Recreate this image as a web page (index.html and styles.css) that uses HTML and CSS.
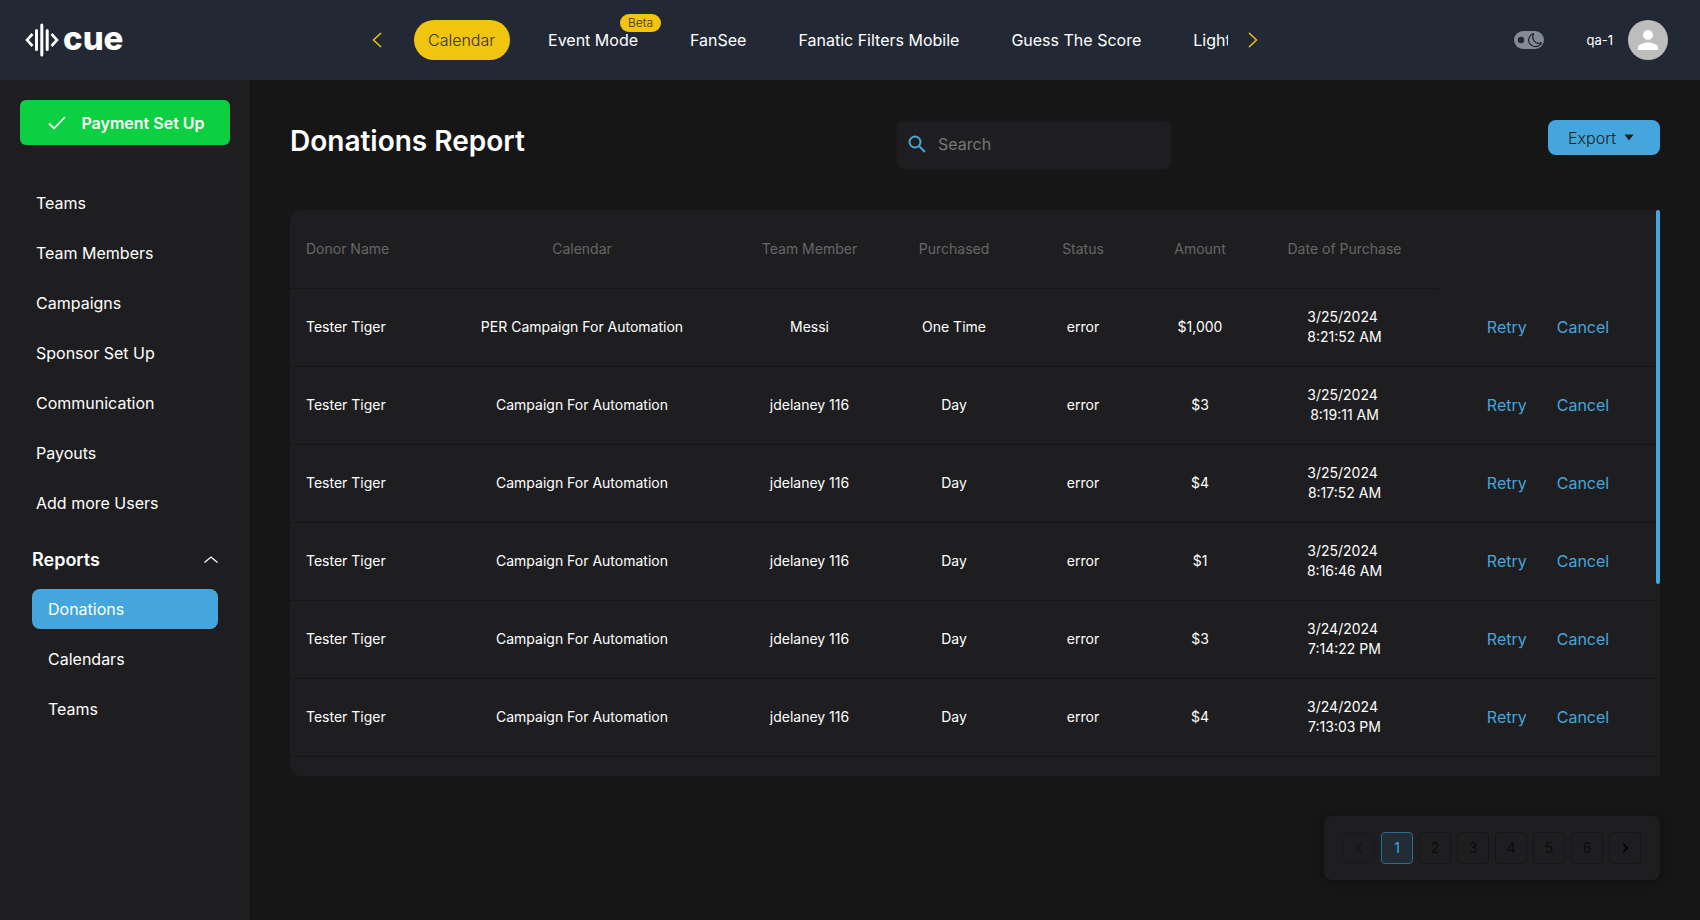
FILE: index.html
```html
<!DOCTYPE html>
<html lang="en">
<head>
<meta charset="utf-8">
<meta name="viewport" content="width=device-width, initial-scale=1">
<title>Donations Report</title>
<link rel="stylesheet" href="styles.css">
</head>
<body>
<header class="topbar">
  <a class="brand" href="#" aria-label="cue home">
    <svg class="brand-mark" width="34" height="34" viewBox="0 0 34 34" fill="none" stroke="#fff" stroke-width="3" stroke-linecap="round" aria-hidden="true">
      <path d="M7.500 11 2 17l5.500 6M26.500 11l5.500 6-5.500 6" stroke-linecap="butt" stroke-width="2.600"/>
      <path d="M11.500 7.500v19M16.800 2v30M22.200 7.500v19"/>
    </svg>
    <span class="brand-name">cue</span>
  </a>
  <div class="tabs">
    <button class="arrow" type="button" aria-label="Previous"><svg width="10" height="16" viewBox="0 0 10 16" fill="none" stroke="currentColor" stroke-width="1.500"><path d="M9 1 1.500 8 9 15"/></svg></button>
    <nav class="tab-strip">
      <a class="tab tab-active" href="#">Calendar</a>
      <a class="tab" href="#">Event Mode<span class="badge">Beta</span></a>
      <a class="tab" href="#">FanSee</a>
      <a class="tab" href="#">Fanatic Filters Mobile</a>
      <a class="tab" href="#">Guess The Score</a>
      <a class="tab" href="#">Light Show</a>
    </nav>
    <button class="arrow" type="button" aria-label="Next"><svg width="10" height="16" viewBox="0 0 10 16" fill="none" stroke="currentColor" stroke-width="1.500"><path d="M1 1 8.500 8 1 15"/></svg></button>
  </div>
  <div class="account">
    <button class="theme-toggle" type="button" aria-label="Dark mode">
      <svg width="30" height="18" viewBox="0 0 30 18"><circle cx="7" cy="9" r="3.200" fill="#222935"/><path d="M19.500 2.500C15.500 4 13.800 8 15 11.200c1.500 4 6.500 5.700 10.200 3.200 1-.7 1.700-1.400 2.200-2.500-3 .9-6.200 0-7.600-2.400-1.400-2.300-1.200-5 -.3-7Z" fill="none" stroke="#222" stroke-width="1.200" stroke-linejoin="round"/></svg>
    </button>
    <span class="user-name">qa-1</span>
    <svg class="avatar" width="40" height="40" viewBox="0 0 40 40" role="img" aria-label="Profile"><circle cx="20" cy="20" r="20" fill="#bdbdbd"/><circle cx="20" cy="15" r="5" fill="#fff"/><path d="M10 30v-2.500c0-3.300 6.700-5 10-5s10 1.700 10 5V30Z" fill="#fff"/></svg>
  </div>
</header>
<div class="shell">
  <aside class="sidebar">
    <button class="payment" type="button">
      <svg width="18" height="14" viewBox="0 0 18 14" fill="none" stroke="#fff" stroke-width="1.800" aria-hidden="true"><path d="M1 7.500 6 12.500 17 1"/></svg>
      Payment Set Up
    </button>
    <nav>
      <ul class="menu">
        <li><a href="#">Teams</a></li>
        <li><a href="#">Team Members</a></li>
        <li><a href="#">Campaigns</a></li>
        <li><a href="#">Sponsor Set Up</a></li>
        <li><a href="#">Communication</a></li>
        <li><a href="#">Payouts</a></li>
        <li><a href="#">Add more Users</a></li>
      </ul>
      <button class="group" type="button" aria-expanded="true">Reports
        <svg width="14" height="8" viewBox="0 0 14 8" fill="none" stroke="#fff" stroke-width="1.300" aria-hidden="true"><path d="M.5 6.500 7 1l6.500 5.500"/></svg>
      </button>
      <ul class="submenu">
        <li><a class="current" href="#">Donations</a></li>
        <li><a href="#">Calendars</a></li>
        <li><a href="#">Teams</a></li>
      </ul>
    </nav>
  </aside>
  <main class="content">
    <div class="page-head">
      <h1>Donations Report</h1>
      <label class="search">
        <svg width="18" height="18" viewBox="0 0 18 18" fill="none" stroke="#44a6dd" stroke-width="2" aria-hidden="true"><circle cx="7" cy="7" r="5.500"/><path d="m11 11 6 6"/></svg>
        <input type="search" placeholder="Search" aria-label="Search">
      </label>
      <div class="head-actions">
        <button class="export" type="button">Export <svg width="10" height="7" viewBox="0 0 10 7" aria-hidden="true"><path d="M.5.500h9L5 6.500Z" fill="#1e1e20"/></svg></button>
      </div>
    </div>
    <div class="panel">
      <table class="report">
        <colgroup><col class="c-donor"><col class="c-calendar"><col class="c-member"><col class="c-purchased"><col class="c-status"><col class="c-amount"><col class="c-date"><col class="c-actions"></colgroup>
        <thead>
          <tr><th>Donor Name</th><th>Calendar</th><th>Team Member</th><th>Purchased</th><th>Status</th><th>Amount</th><th>Date of Purchase</th><td></td></tr>
        </thead>
        <tbody>
          <tr><td>Tester Tiger</td><td>PER Campaign For Automation</td><td>Messi</td><td>One Time</td><td>error</td><td>$1,000</td><td>3/25/2024&nbsp;<br>8:21:52 AM</td><td><div class="actions"><a href="#">Retry</a><a href="#">Cancel</a></div></td></tr>
          <tr><td>Tester Tiger</td><td>Campaign For Automation</td><td>jdelaney 116</td><td>Day</td><td>error</td><td>$3</td><td>3/25/2024&nbsp;<br>8:19:11 AM</td><td><div class="actions"><a href="#">Retry</a><a href="#">Cancel</a></div></td></tr>
          <tr><td>Tester Tiger</td><td>Campaign For Automation</td><td>jdelaney 116</td><td>Day</td><td>error</td><td>$4</td><td>3/25/2024&nbsp;<br>8:17:52 AM</td><td><div class="actions"><a href="#">Retry</a><a href="#">Cancel</a></div></td></tr>
          <tr><td>Tester Tiger</td><td>Campaign For Automation</td><td>jdelaney 116</td><td>Day</td><td>error</td><td>$1</td><td>3/25/2024&nbsp;<br>8:16:46 AM</td><td><div class="actions"><a href="#">Retry</a><a href="#">Cancel</a></div></td></tr>
          <tr><td>Tester Tiger</td><td>Campaign For Automation</td><td>jdelaney 116</td><td>Day</td><td>error</td><td>$3</td><td>3/24/2024&nbsp;<br>7:14:22 PM</td><td><div class="actions"><a href="#">Retry</a><a href="#">Cancel</a></div></td></tr>
          <tr><td>Tester Tiger</td><td>Campaign For Automation</td><td>jdelaney 116</td><td>Day</td><td>error</td><td>$4</td><td>3/24/2024&nbsp;<br>7:13:03 PM</td><td><div class="actions"><a href="#">Retry</a><a href="#">Cancel</a></div></td></tr>
        </tbody>
      </table>
      <div class="scroll-track"><div class="scroll-thumb"></div></div>
    </div>
    <nav class="pager" aria-label="Pages">
      <button type="button" disabled aria-label="Previous page"><svg width="7" height="10" viewBox="0 0 7 10" fill="none" stroke="currentColor" stroke-width="1.700"><path d="M6 .8 1.500 5 6 9.200"/></svg></button>
      <button type="button" class="page-current" aria-current="page">1</button>
      <button type="button">2</button>
      <button type="button">3</button>
      <button type="button">4</button>
      <button type="button">5</button>
      <button type="button">6</button>
      <button class="page-next" type="button" aria-label="Next page"><svg width="7" height="10" viewBox="0 0 7 10" fill="none" stroke="currentColor" stroke-width="1.700"><path d="M1 .8 5.500 5 1 9.200"/></svg></button>
    </nav>
  </main>
</div>
</body>
</html>
```

FILE: styles.css
```css
* { box-sizing: border-box; }

body {
  margin: 0;
  min-height: 100vh;
  display: flex;
  flex-direction: column;
  background: #161617;
  color: #fff;
  font: 400 16px/20px Inter, sans-serif;
}

a { color: inherit; text-decoration: none; }
button { font: inherit; color: inherit; background: none; border: 0; padding: 0; cursor: pointer; }
ul { list-style: none; margin: 0; padding: 0; }
svg { display: block; flex: none; }

.topbar {
  display: grid;
  grid-template-columns: 372px minmax(0, 1fr) 442px;
  align-items: center;
  height: 80px;
  background: #222935;
}
.brand { display: flex; align-items: center; gap: 4px; padding-left: 25px; }
.brand-name { font-size: 33px; line-height: 36px; font-weight: 800; padding-bottom: 4px; }

.tabs { display: flex; align-items: center; gap: 32px; }
.arrow { color: #f1c40f; }
.tabs .arrow:last-child { margin-left: -12px; }
.tab-strip { flex: 1; min-width: 0; display: flex; gap: 24px; overflow: hidden; padding: 20px 0; }
.tab { position: relative; flex: none; padding: 10px 14px; border-radius: 20px; }
.tab-active { padding: 10px 15px 10px 14px; background: #f1c40f; color: #333; font-weight: 300; }
.badge {
  position: absolute;
  top: -6px;
  right: -9px;
  padding: 0 8px;
  border-radius: 9px;
  background: #f1c40f;
  color: #333;
  font-size: 12px;
  line-height: 18px;
  font-weight: 300;
}

.account { display: flex; align-items: center; justify-content: flex-end; padding-right: 32px; }
.theme-toggle { border-radius: 9px; background: #838b9a; }
.user-name { margin: 0 15px 0 42px; font-size: 13px; }

.shell { flex: 1; display: flex; }
.sidebar { flex: none; width: 250px; padding: 20px; background: #1e1e20; }
.payment {
  display: flex;
  align-items: center;
  justify-content: center;
  gap: 15px;
  width: 100%;
  height: 45px;
  padding-left: 3px;
  margin-bottom: 33px;
  border-radius: 6px;
  background: #0ccf41;
  font-weight: 600;
}
.menu a { display: block; padding: 15px 16px; }
.group {
  display: flex;
  align-items: center;
  justify-content: space-between;
  width: 100%;
  padding: 22px 12px 19px;
  font-size: 18px;
  font-weight: 600;
}
.submenu { display: grid; gap: 10px; padding: 0 12px; }
.submenu a { display: block; padding: 10px 16px; border-radius: 8px; }
.submenu .current { background: #44a6dd; }

.content { flex: 1; min-width: 0; padding: 40px; }
.page-head {
  display: grid;
  grid-template-columns: 606fr 276px 488fr;
  align-items: start;
  margin-bottom: 40px;
}
h1 { margin: 0; font-size: 28px; line-height: 42px; font-weight: 600; }
.search {
  display: flex;
  align-items: center;
  gap: 12px;
  height: 50px;
  padding: 0 11px 2px;
  border: 1px solid #19191a;
  border-radius: 8px;
  background: #1e1e20;
}
.search input { flex: 1; min-width: 0; border: 0; outline: 0; padding: 0; background: none; color: #fff; font: inherit; }
.search input::placeholder { color: #777; opacity: 1; }
.head-actions { display: flex; justify-content: flex-end; }
.export {
  display: flex;
  align-items: center;
  gap: 8px;
  height: 35px;
  padding: 0 26px 0 20px;
  border-radius: 8px;
  background: #44a6dd;
  color: #1e1e20;
  font-weight: 300;
}

.panel { display: flex; align-items: stretch; margin-bottom: 40px; border-radius: 12px 0 0 12px; background: #1e1e20; overflow: hidden; }
.report { flex: 1; min-width: 0; margin: 1px 0 19px; table-layout: fixed; border-collapse: separate; border-spacing: 0; font-size: 14px; text-align: center; }
.report th, .report td { height: 78px; padding: 0 16px 2px; border-bottom: 1px solid #161617; }
.report th { color: #666; font-weight: 400; padding: 0 0 2px; }
.report th:first-child { padding-left: 16px; }
.report thead td { border-bottom: 0; }
.report th:first-child, .report td:first-child { text-align: left; }
.report tbody td:last-child { padding: 0 16px 2px 18px; }
.c-donor { width: 146px; }
.c-calendar { width: 292px; }
.c-member { width: 163px; }
.c-purchased { width: 126px; }
.c-status { width: 132px; }
.c-amount { width: 102px; }
.c-date { width: 187px; }
.c-actions { width: 218px; }
.actions { display: flex; justify-content: center; gap: 30px; font-size: 16px; color: #44a6dd; }
.scroll-track { flex: none; width: 4px; }
.scroll-thumb { height: 66%; border-radius: 2px; background: #44a6dd; }

.pager {
  display: flex;
  gap: 6px;
  width: max-content;
  margin-left: auto;
  padding: 16px 19px;
  border-radius: 8px;
  background: #1e1e20;
  box-shadow: 0 2px 8px rgba(0, 0, 0, .4);
}
.pager button {
  display: grid;
  place-items: center;
  width: 32px;
  height: 32px;
  border: 1px solid #161617;
  border-radius: 4px;
  color: #0b0b0b;
  font-size: 14px;
}
.pager button:disabled { border-color: #1a1a1c; color: #161617; }
.pager .page-current { border-color: #2f6b8d; background: #222c34; color: #44a6dd; }
.pager .page-next { color: #000; }
```
